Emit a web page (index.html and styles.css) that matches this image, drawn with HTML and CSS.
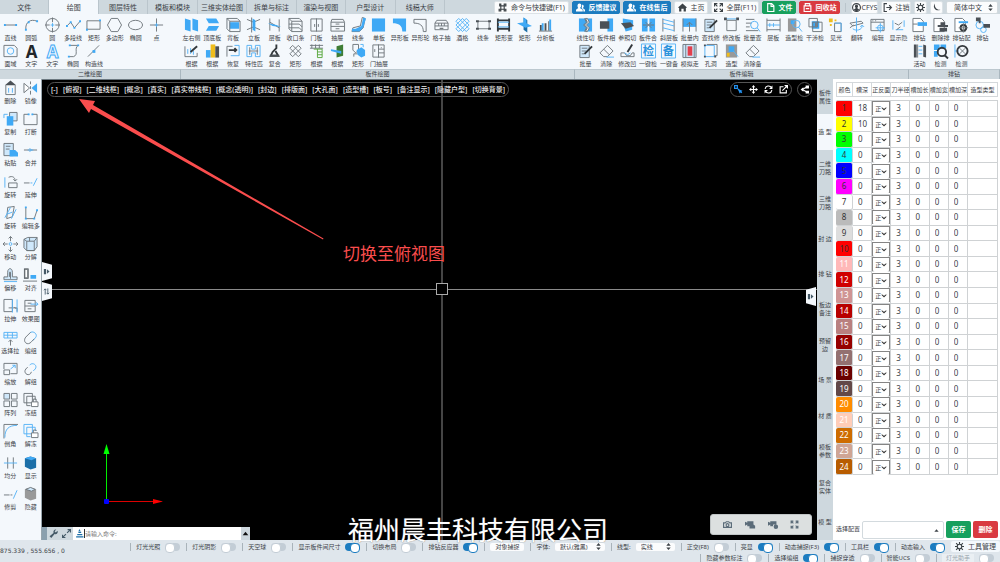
FILE: index.html
```html
<!DOCTYPE html>
<html lang="zh-CN">
<head>
<meta charset="utf-8">
<title>板件设计</title>
<link rel="stylesheet" href="styles.css">
</head>
<body>
<header class="topbar">
  <nav class="tabs">
    <button>文件</button><button class="active">绘图</button><button>图层特性</button><button>模板和模块</button><button>三维实体绘图</button><button>拆单与标注</button><button>渲染与视图</button><button>户型设计</button><button>线稿大师</button>
  </nav>
  <div class="actions">
    <button class="act w-xl"><i data-icon="command"></i>命令与快捷键(F1)</button>
    <button class="act blue w-l"><i data-icon="people"></i>反馈建议</button>
    <button class="act blue w-l"><i data-icon="people"></i>在线售后</button>
    <button class="act w-s"><i data-icon="home"></i>主页</button>
    <button class="act w-l"><i data-icon="full"></i>全屏(F11)</button>
    <button class="act green w-s"><i data-icon="file"></i>文件</button>
    <button class="act red w-m"><i data-icon="bin"></i>回收站</button>
    <span class="rule"></span>
    <button class="act user"><i data-icon="user"></i>CFYS</button>
    <button class="act w-xs"><i data-icon="logout"></i>注销</button>
    <button class="act sq" aria-label="设置"><i data-icon="gear"></i></button>
    <button class="act sq" aria-label="深色模式"><i data-icon="moon"></i></button>
    <span class="pick lang"><select aria-label="语言"><option>简体中文</option></select><i data-icon="updown"></i></span>
  </div>
</header>

<section class="ribbon">
  <div class="group g-draw"><div class="tools" data-tools="draw"></div><h2>二维绘图</h2></div>
  <div class="group g-panel"><div class="tools" data-tools="panel"></div><h2>板件绘图</h2></div>
  <div class="group g-edit"><div class="tools" data-tools="edit"></div><h2>板件编辑</h2></div>
  <div class="group g-drill"><div class="tools" data-tools="drill"></div><h2>排钻</h2></div>
</section>

<main class="work">
  <aside class="side" data-tools="side"></aside>
  <div class="canvas">
    <svg class="scene" aria-hidden="true">
      <path d="M400 0V460M0 209.500H776" stroke="#8a8a8a" fill="none"/>
      <rect x="394.500" y="203.500" width="11" height="11" fill="#000" stroke="#aaa"/>
      <path d="M64.500 420V372" stroke="#0e0"/><path d="M64.500 364l3 10h-6z" fill="#0f0"/>
      <path d="M65 421.500H113" stroke="#d00"/><path d="M121 421.500l-10 -2.500v5z" fill="#f00"/>
      <rect x="62" y="419" width="5" height="5" rx="1" fill="#00f"/>
      <path d="M37 19L53 21L51 25L281.500 158.500L281 159.500L49 29L47 33Z" fill="#fa4d4d"/>
    </svg>
    <p class="note">切换至俯视图</p>
    <div class="viewbar">
      <button>[-]</button><button>[俯视]</button><button>[二维线框]</button><button>[概念]</button><button>[真实]</button><button>[真实带线框]</button><button>[概念(透明)]</button><button>[封边]</button><button>[排版面]</button><button>[大孔面]</button><button>[造型槽]</button><button>[板号]</button><button>[备注显示]</button><button>[隐藏户型]</button><button>[切换背景]</button>
    </div>
    <div class="navbar">
      <div class="pill">
        <button class="on" aria-label="选择"><i data-icon="pick"></i></button><button aria-label="平移"><i data-icon="pan"></i></button><button aria-label="旋转视图"><i data-icon="orbit"></i></button><button aria-label="弹出"><i data-icon="popout"></i></button>
      </div>
      <button class="pill single" aria-label="分享"><i data-icon="share"></i></button>
    </div>
    <div class="handles">
      <button aria-label="展开左栏"><i data-icon="tabright"></i></button><button aria-label="切换顺序"><i data-icon="swap"></i></button>
    </div>
    <button class="handle-right" aria-label="收起右栏"><i data-icon="tabright"></i></button>
    <form class="command">
      <span class="grip"></span>
      <button type="button" aria-label="工具"><i data-icon="wrench"></i></button>
      <button type="button" aria-label="展开"><i data-icon="expand"></i></button>
      <label class="prompt"><i data-icon="stack"></i><input type="text" placeholder="请输入命令:" aria-label="命令"></label>
      <button type="button" class="up" aria-label="历史"><i data-icon="caret"></i></button>
    </form>
    <div class="camera">
      <button aria-label="拍照"><i data-icon="photo"></i></button><button aria-label="录像"><i data-icon="video"></i></button><button aria-label="录像设置"><i data-icon="video2"></i></button><button aria-label="全屏"><i data-icon="corners"></i></button>
    </div>
    <p class="caption">福州晨丰科技有限公司</p>
  </div>
  <nav class="vtabs">
    <button>板件<br>属性</button><button class="active">造 型</button><button>二维<br>刀路</button><button>三维<br>刀路</button><button>封 边</button><button>排 钻</button><button>板边<br>备注</button><button>预留<br>边</button><button>场 景</button><button>材 质</button><button>模板<br>参数</button><button>复合<br>实体</button><button>模 型</button>
  </nav>
  <aside class="props">
    <table>
      <thead><tr><th class="c-color">颜色</th><th>槽深</th><th>正反面</th><th>刀半径</th><th>槽加长</th><th>槽加宽</th><th>槽加深</th><th class="c-type">造型类型</th></tr></thead>
      <tbody id="rows"></tbody>
    </table>
    <div class="config">
      <label for="config">选择配置</label>
      <span class="pick"><select id="config"><option></option></select><i data-icon="caret"></i></span>
      <button class="save">保存</button><button class="del">删除</button>
    </div>
  </aside>
</main>

<footer class="status">
  <output class="coords">875.339 , 555.656 , 0</output>
  <div class="lines">
    <div class="line">
      <label>灯光光照<input type="checkbox"></label>
      <label>灯光阴影<input type="checkbox"></label>
      <label>天空球<input type="checkbox"></label>
      <label>显示板件间尺寸<input type="checkbox" checked></label>
      <label>切换布局<input type="checkbox"></label>
      <label>排钻反应器<input type="checkbox" checked></label>
      <span class="item"><button class="snap">对象捕捉</button></span>
      <label>字体:<span class="pick font"><select><option>默认(雅黑)</option></select><i data-icon="updown"></i></span></label>
      <label>线型:<span class="pick stroke"><select><option>实线</option></select><i data-icon="updown"></i></span></label>
      <label>正交(F8)<input type="checkbox"></label>
      <label>亮显<input type="checkbox" checked></label>
      <label>动态捕捉(F3)<input type="checkbox" checked></label>
      <label>工具栏<input type="checkbox" checked></label>
      <label>动态输入<input type="checkbox" checked></label>
      <button class="manage"><i data-icon="gear"></i>工具管理</button>
    </div>
    <div class="line second">
      <label>隐藏参数标注<input type="checkbox"></label>
      <label>选择编组<input type="checkbox" checked></label>
      <label>捕捉穿透<input type="checkbox"></label>
      <label>智能UCS<input type="checkbox"></label>
      <label class="off"><span>灯光助手</span><input type="checkbox" disabled></label>
    </div>
  </div>
</footer>
<script src="script.js"></script>
</body>
</html>
```

FILE: styles.css
```css
* { box-sizing: border-box; }
body {
  margin: 0; height: 100vh; display: flex; flex-direction: column; overflow: hidden;
  font: 6px/10px "Noto Sans", "Noto Sans CJK SC", sans-serif; color: #3c4247; background: #f4f8fc;
}
button, input, select { font: inherit; color: inherit; margin: 0; padding: 0; border: 0; background: none; border-radius: 0; }
button { white-space: nowrap; }
p, h2 { margin: 0; font-weight: 400; }
i { display: flex; }
svg { display: block; }

/* icon strokes and fills */
.ico { width: 16px; height: 16px; fill: none; stroke-width: 1; overflow: visible; }
.tool .ico { width: 15px; height: 16px; }
.ico .k { stroke: #6f767c; } .ico .b { stroke: #55b2f5; } .ico .g { stroke: #58a83c; }
.ico .h { stroke: #33383c; stroke-width: 2; } .ico .c { stroke: currentColor; stroke-width: 2; }
.ico .K { fill: #4a5056; } .ico .B { fill: #3fa9f5; } .ico .P { fill: #cfe8fb; stroke: #6f767c; }
.ico .C { fill: currentColor; } .ico .Y { fill: #efbd1c; } .ico .R { fill: #e33f4c; } .ico .N { fill: #3e7d35; }
.ico .Q { fill: #999; } .ico .D { fill: #1c6fa8; } .ico .W { fill: #fff; stroke: #6f767c; }
.ico text { font: bold 12px "Noto Sans CJK SC", sans-serif; text-anchor: middle; fill: #2c93dc; stroke: none; }
.ico .letter { font: bold 18px "Noto Sans", sans-serif; fill: #22262a; }
.ico .hollow { font: bold 18px "Noto Sans", sans-serif; fill: #e8f5ff; stroke: #3fa9f5; }

/* top bar */
.topbar { display: flex; height: 14px; background: #ced8de; font-size: 7px; justify-content: space-between; }
.tabs { display: grid; grid-template-columns: repeat(9, 1fr); flex: 0 1 445px; }
.tabs button { border-right: 1px solid #bac5cc; padding-top: 2px; }
.tabs .active { background: #f4f8fc; }
.actions { display: flex; gap: 3px; padding: 1px 2px 0 0; }
.act { display: flex; align-items: center; justify-content: center; gap: 4px; background: #fbfcfd; border: 1px solid #dce2e6; border-radius: 2px; height: 13px; }
.act .ico { width: 9px; height: 9px; }
.act.blue { background: #1c7cc0; color: #fff; border-color: #1c7cc0; font-weight: 600; }
.act.green { background: #17a05d; color: #fff; border-color: #17a05d; font-weight: 600; }
.act.red { background: #d93a40; color: #fff; border-color: #d93a40; font-weight: 600; }
.w-xl { width: 75px; } .w-l { width: 48px; } .w-m { width: 41px; } .w-s { width: 34px; } .w-xs { width: 30px; }
.user { width: 27px; gap: 1px; } .sq { width: 13px; }
.rule { width: 1px; margin: 2px; background: #bac5cc; }
.pick { display: grid; align-items: center; min-width: 0; }
.pick > * { grid-area: 1 / 1; }
.pick select { appearance: none; width: 100%; height: 100%; background: #fbfcfd; border: 1px solid #d3dade; border-radius: 2px; min-width: 0; }
.pick i { justify-self: end; pointer-events: none; margin-right: 4px; }
.pick .ico { width: 7px; height: 7px; }
.lang { width: 52px; } .lang select { padding-left: 7px; }

/* ribbon */
.ribbon { display: grid; grid-template-columns: 181fr 394fr 334fr 91fr; }
.group { min-width: 0; }
.group h2 { height: 10px; background: #ced8de; border-top: 1px solid #bcc8cf; border-right: 1px solid #aab7bf; text-align: center; font-size: 6px; line-height: 9px; }
.tools { display: grid; grid-auto-rows: 26px; padding-top: 3px; height: 55px; }
.g-draw .tools { grid-template-columns: repeat(8, 1fr); padding-right: 14px; }
.g-panel .tools { grid-template-columns: repeat(18, 1fr); padding-right: 19px; }
.g-edit .tools { grid-template-columns: repeat(16, 1fr); }
.g-drill .tools { grid-template-columns: repeat(4, 1fr); padding-right: 7px; }
.tool { display: flex; flex-direction: column; align-items: center; min-width: 0; line-height: 10px; }

/* work area */
.work { flex: 1; display: flex; min-height: 0; }
.side { flex: none; width: 42px; display: grid; grid-template-columns: 1fr 1fr; grid-template-rows: repeat(14, 1fr); padding-bottom: 24px; border-right: 1px solid #98a5ad; }
.side .tool { padding-top: 1px; }
.canvas { flex: 1; position: relative; background: #000; min-width: 0; border-top: 1px solid #6c7880; }
.scene { position: absolute; inset: 0; width: 100%; height: 100%; }
.note { position: absolute; left: 301px; top: 162px; font-size: 17px; line-height: 24px; color: #fa4d4d; }
.caption { position: absolute; left: 306px; bottom: -2px; z-index: 2; font-family: "Noto Sans CJK SC", sans-serif; font-size: 26px; line-height: 26px; color: #fff; text-shadow: 0 0 1px #555; white-space: nowrap; }
.viewbar { position: absolute; left: 5px; top: 2px; height: 15px; display: flex; gap: 5px; padding: 0 3px; border: 1px solid #555; border-radius: 8px; color: #eee; font-size: 7px; font-weight: 500; }
.navbar { position: absolute; right: 5px; top: 2px; display: flex; gap: 5px; color: #fff; }
.pill { display: flex; gap: 6px; align-items: center; height: 15px; padding: 0 3px; border: 1px solid #555; border-radius: 8px; }
.pill .ico { width: 9px; height: 9px; }
.single { padding: 0 2px; }
.pill .on { color: #2492f0; }
.handles { position: absolute; left: 0; top: 182px; display: grid; gap: 1px; }
.handles button, .handle-right { width: 10px; height: 19px; padding-left: 1px; background: #f4f8fc; clip-path: polygon(0 0, 100% 15%, 100% 85%, 0 100%); }
.handle-right { position: absolute; right: 1px; top: 207px; clip-path: polygon(0 15%, 100% 0, 100% 100%, 0 85%); }
.handles .ico, .handle-right .ico { width: 7px; height: 7px; color: #445967; }
.command { position: absolute; left: 0; bottom: 0; width: 208px; height: 13px; display: flex; background: #ced8de; color: #445967; }
.grip { width: 5px; background: #8ba0ae; }
.command button { width: 13px; display: flex; align-items: center; justify-content: center; }
.command .ico { width: 9px; height: 9px; }
.command .up { width: 9px; color: #111; }
.prompt { flex: 1; display: flex; align-items: center; background: #fff; color: #1c6fa8; padding-left: 2px; min-width: 0; }
.prompt input { flex: 1; min-width: 0; border-left: 1px solid #333; height: 9px; }
.prompt input::placeholder { color: #777; }
.camera { position: absolute; right: 5px; bottom: 5px; height: 21px; width: 102px; display: flex; justify-content: space-around; align-items: center; padding: 0 5px; background: #dce0e0; border: 1px solid #c0c5c6; border-radius: 3px; color: #5b6c79; }
.camera .ico { width: 9px; height: 9px; }

/* right panel */
.vtabs { flex: none; width: 16px; display: grid; grid-template-rows: repeat(13, 1fr); background: #ced8de; }
.vtabs button { line-height: 8px; }
.vtabs .active { background: #f4f8fc; }
.props { flex: none; width: 167px; background: #fff; display: flex; flex-direction: column; padding: 3px 2px 2px 3px; }
table { width: 100%; height: 393px; border-collapse: separate; border-spacing: 0; table-layout: fixed; }
th { font-weight: 400; padding: 0; height: 15px; border: 1px solid #d4d8db; border-left-width: 0; white-space: nowrap; }
td { padding: 0; border: 1px solid #cfd2d4; border-width: 0 1px 1px 0; font-size: 8px; line-height: 14px; height: 15px; }
tbody tr:first-child td { border-top-width: 1px; }
thead::after { content: ""; display: block; height: 3px; }
.c-color { width: 17px; border-left-width: 1px; } .c-type { width: 30px; }
.swatch { text-align: center; border-radius: 2px; }
td input { display: block; width: 100%; height: 14px; padding-left: 5px; }
td .pick { border: 1px solid #858585; height: 14px; }
td .pick select { border: 0; font-size: 6px; padding-left: 2px; background: #fff; }
td .pick i { margin-right: 2px; color: #111; }
td .pick .ico { width: 6px; height: 6px; }
.config { display: flex; gap: 2px; height: 17px; margin-top: auto; align-items: stretch; line-height: 16px; }
.config .pick { flex: 1; }
.config .pick select { background: #fff; }
.save, .del { width: 25px; border-radius: 2px; color: #fff; font-size: 7px; font-weight: 600; background: #17a05d; }
.del { background: #d93a40; }

/* status bar */
.status { display: flex; align-items: center; height: 22px; background: #dfe6ec; white-space: nowrap; }
.lines { flex: 1; align-self: stretch; padding-top: 1px; }
.coords { font-family: "DejaVu Sans", sans-serif; font-size: 6px; width: 58px; }
.line { display: flex; justify-content: flex-end; height: 11px; align-items: center; }
.line label, .line .item { display: flex; align-items: center; gap: 5px; height: 8px; line-height: 8px; padding: 0 6px 0 5px; border-left: 1px solid #a9b3ba; }
.line input { appearance: none; width: 15px; height: 8px; border-radius: 4px; background: #c3cdd6; display: flex; }
.line input::before { content: ""; width: 8px; height: 8px; border-radius: 4px; background: #fff; border: 1px solid #c3cdd6; }
.line input:checked { background: #1c7cc0; justify-content: flex-end; }
.line input:checked::before { border-color: #1c7cc0; }
.snap { width: 34px; height: 8px; line-height: 8px; background: #fbfcfd; border-radius: 2px; }
.line .pick { height: 8px; } .line .pick i { margin-right: 3px; }
.line .pick select { border: 0; padding-left: 5px; line-height: 8px; }
.font { width: 50px; } .stroke { width: 39px; }
.manage { display: flex; gap: 4px; align-items: center; justify-content: center; width: 49px; height: 11px; background: #f4f8fc; font-size: 7px; border-radius: 2px; }
.manage .ico { width: 9px; height: 9px; }
.off span { background: #eaeff3; color: #9aa6ae; padding: 0 4px; line-height: 8px; }
```

FILE: script.js
```js
// Each icon is a list of layers on a 16x16 grid: a class letter, then path data.
const icons = {
  line: 'k M2 8H14|B M1 7h2v2h-2zM13 7h2v2h-2z',
  arc: 'k M2 13C1 5 7 1 14 4|B M1 12h2v2h-2zM13 3h2v2h-2zM4 4h2v2h-2z',
  circle: 'k M15 8A7 7 0 1 1 1 8A7 7 0 1 1 15 8M8 0V5M8 11V16M0 8H5M11 8H16|b M8 6V10M6 8H10',
  poly: 'k M1 9L5 5L9 11L15 4|B M0 8h2v2h-2zM4 4h2v2h-2zM8 10h2v2h-2zM14 3h2v2h-2z',
  rect: 'k M1 3.500H15V12.500H1Z|B M0 12h2v2h-2zM14 2h2v2h-2z',
  hex: 'k M4.500 1H11.500L15.500 8L11.500 15H4.500L.5 8Z',
  ellipse: 'k M15.500 8A7.500 5 0 1 1 .5 8A7.500 5 0 1 1 15.500 8',
  point: 'k M8 1V15M1 8H15|b M8 6V10M6 8H10',
  region: 'k M1 2H12L15 5V14H1Z|b M11.500 8A3.500 3.500 0 1 1 4.500 8A3.500 3.500 0 1 1 11.500 8',
  textA: 'letter A', textB: 'hollow A',
  spline: 'k M4 2H13C8 5 14 12 8 14H3|B M3 1h2v2h-2zM12 1h2v2h-2zM2 13h2v2h-2z',
  xline: 'k M2 14L14 2|B M7 7h3v3h-3z',
  lr: 'B M1 1L7 3V15L1 13ZM9 1L15 3V15L9 13Z',
  tb: 'B M1 1H12L15 6H4ZM4 9H15L12 14H1Z',
  back: 'B M4 5H14V12H4Z|k M1 1H12L15 4V15H4L1 12ZM1 1L4 4H15M4 4V15',
  stand: 'k M1 2L8 5L15 2M1 13L8 10L15 13M6 0V16|B M7 1L10 3V15L7 13Z',
  shelf: 'k M3 1V14M13 2V15M3 5L13 11|B M1 6L10 8L15 10L6 9Z',
  close: 'k M1 1H12L15 4V15H4L1 12ZM1 1L4 4H15M4 4V15M1 7H12L15 10M1 11H12L15 14',
  door: 'k M2 1.500H14V14.500H2ZM8 1V15M6 7V10M10 7V10',
  drawer: 'k M2 2H14L15.500 5V14.500H1V5ZM1 5H15M1 9.500H15M6 7H10M6 12H10',
  strip: 'k M12 0L10 9L2 11L1 15H9L13 11L15 1Z|B M13 0L11 9L5 12H1V15H9L13 11L16 1Z',
  square: 'B M1 1H15V15H1Z',
  odd: 'B M1 1H15V15H11C11 8 7 6 1 6Z',
  oddw: 'k M1 2H14V15H11C11 8 7 6 1 6Z',
  lattice: 'k M3 3H13L15 6V13H1V6ZM1 6H15M1 9H15M5 6V9M8 6V9M11 6V9|K M6 11h4v1h-4z',
  net: 'b M1 4L4 1L15 12L12 15L1 4M1 8L8 1L15 8L8 15ZM1 12L12 1L15 4L4 15Z',
  bar: 'k M2 4H14V12H2Z|K M0 3h3v2h-3zM13 3h3v2h-3zM0 11h3v2h-3zM13 11h3v2h-3z',
  rectv: 'h M2 1V15M14 1V15M2 3H14M2 12H14|b M2 5H14M2 10H14',
  cross: 'D M7 0L11 3V16L7 13Z|B M0 6L8 5L16 9L9 11ZM7 0L10 2V8L7 6Z',
  chart: 'K M2 8h2v6h-2zM7 6h2v8h-2zM11 4h1v10h-1z|B M4 6h2v8h-2zM12 2h2v12h-2z|k M1 14.500H15',
  ruler: 'k M1 3V14H14V10|b M4 6V11M7 5V11M10 8V12|h M7 9L14 3',
  bars: 'B M1 7h5v8h-5z|Y M6 1h5v14h-5z|K M11 3h4v12h-4z',
  restore: 'k M1 3H7M1 3V14|b M9 2H14V13H5|h M3 7H11M9 5L11 7L9 9',
  match: 'b M1 2H6V6H10V2H15V14H10V10H6V14H1Z|k M3 8H13M4 4V12M12 4V12',
  hook: 'h M10 1V5L6 9L4 13H12L9 8|K M3 12h10v2h-10z',
  wave: 'k M2 5L5 2L8 5L11 2L14 5L11 8L8 5L5 8ZM2 11L5 8L8 11L11 8L14 11L11 14L8 11L5 14Z',
  gridg: 'k M1 2H15M1 5H15M3 1V5M7 1V5M11 1V5|g M5 6H14V15H9V6M9 9H14M9 12H14',
  green: 'N M7 3L14 1V13L7 15Z|B M1 6L12 8V11L1 8Z',
  cubes: 'k M2 1H8V7L5 10L2 7ZM3 11H7M3 11V14|B M6 7L11 4L15 7V13L11 15L7 12Z|b M10 1H13V4',
  cabinet: 'k M2 1.500H14V14.500H2ZM8 1V15M8 6H14M8 10H14M4 6V9M11 4V5',
  tear: 'B M1 1H15V15H1Z|k M7 1L9 5L6 8L9 11L7 15|W M8 1L10 5L7 8L10 11L8 15H10L12 11L9 8L12 5L10 1Z',
  pcut: 'B M9 1H15V15H9Z|K M1 4H11V12H1Z',
  refcut: 'B M3 1L14 3V8L3 6ZM4 9L13 9V13L6 15Z|K M1 6L11 5L15 9L6 12Z',
  join: 'B M1 1H7V15H1ZM9 1H15V15H9Z|k M2 8H14M5 5L8 8L5 11M11 5L8 8L11 11',
  slant: 'k M2 1V15M14 2V15|b M2 2L14 5M2 6L14 9M2 11L14 14',
  inner: 'B M1 1H15V10H1Z|k M1 1V15M15 1V15M8 5V15M5 8L8 5L11 8',
  notepen: 'P M2 2H12V15H2Z|k M4 5H10M4 8H9M4 11H7|h M7 11L15 3',
  editp: 'b M1 1.500H15|k M3 3H13V14H3Z|K M0 0h3v3h-3zM13 0h3v3h-3z',
  search: 'k M1 2H10M1 6H7M1 10H5M1 14H14|b M14 8A4 4 0 1 1 6 8A4 4 0 1 1 14 8M13 11L16 15',
  layer: 'k M1 1V15M15 1V15M1 3H15M1 13H15|b M1 8H15M8 6V10M4 6V10',
  modelq: 'Q M1 1H10V15H1Z|B M4 3H8V7H4Z|b M14 7A4 4 0 1 1 6 7A4 4 0 1 1 14 7M12 10L16 15',
  clash: 'B M4 4H12V12H4Z|k M1 1H10V10H1ZM5 5H15V15H5Z|W M8 6H9V10H8Z',
  light: 'Y M1 1h4v4h-4zM7 2h2v2h-2zM2 7h2v2h-2z|k M7 6H14V15H7Z|b M7 6H14M14 6V15',
  flip: 'k M1 6L13 4L15 6L4 9ZM1 11L5 8|b M8 0V16M4 12C8 15 14 13 14 9M12 10L14 8L16 10',
  panelgear: 'k M1 2H15V14H1ZM1 5H15M3 3V4M6 3V4|b M14 11A3 3 0 1 1 8 11A3 3 0 1 1 14 11M11 6V16M6 11H16',
  dots: 'b M2 3V13M5 13H13M14 3V10|k M4 6L8 8L12 5M6 13L10 10',
  eraser: 'k M1 10L9 2L15 8L9 14H5ZM5 6L11 12|b M8 14.500H16',
  carve: 'k M1 10H5L7 13H11L13 10H15V14H1Z|h M8 9L13 1|b M5 10L8 12L11 10',
  jian: 'b M.5 .5H15.500V15.500H.5Z|zh 检', bei: 'b M.5 .5H15.500V15.500H.5Z|zh 备',
  sim: 'P M1 1H15V15H1Z|R M6 3H11V13H6Z|k M4 1V15M13 1V15',
  hole: 'b M2 2H12V14H2Z|k M4 1H15V13M15 13H12|K M1 13h2v2h-2zM12 13h2v2h-2zM1 1h2v2h-2z',
  shape: 'Q M2 1H14V15H2Z|B M5 3H11V9H5Z|Y M3 10h3v4h-3z|b M10 8L15 14',
  drill: 'W M1 1H9L12 4V15H1Z|B M6 5H16V9H6Z|k M1 7H6',
  drilldel: 'W M1 1H9L12 4V15H1Z|K M8 5h5v3h3v2h-11v-2h3zM7 11h8v4h-8z',
  drillset: 'W M1 1H9L12 4V15H1Z|B M5 4H15V6H5Z|h M13 11A3 3 0 1 1 7 11A3 3 0 1 1 13 11|k M10 6V16M5 11H15',
  drillp: 'b M9 8A4 4 0 1 1 1 8A4 4 0 1 1 9 8M12 13A3 3 0 1 1 6 13A3 3 0 1 1 12 13|K M1 0h5v4h-5zM9 7h7v4h-7zM4 3h2v3h-2z',
  active: 'K M2 1H5V15H2ZM12 1L15 2V15L12 14Z|b M7 3H11M7 7H11M7 11H11|k M6 1V15',
  detect: 'B M1 1h6v6h-6zM8 1h6v4h-6zM1 8h4v6h-4z|h M14 9A4.500 4.500 0 1 1 5 9A4.500 4.500 0 1 1 14 9M12 12L16 16',
  detectx: 'b M1 1V15M1 8H5|h M14.500 8A5.500 5.500 0 1 1 3.500 8A5.500 5.500 0 1 1 14.500 8|k M6 5L12 11M12 5L6 11',
  del: 'K M2 5L8 0L14 5Z|k M3 5V15H13V5|b M6 8V13M10 8V13',
  mirror: 'W M1 3V13L7 8Z|B M15 3V13L9 8Z|k M8 1V4M8 6V9M8 11V15',
  copy: 'P M7 1H15V10H7Z|B M4 5H11V15H4Z|b M1 7V3H5',
  brk: 'k M6 3H1V14H15V3H10|B M5 2h2v2h-2zM9 2h2v2h-2z',
  paste: 'P M1 1H11V14H1Z|k M3 4H8M3 7H7|B M7 8H13L16 11V15H7Z',
  merge: 'k M1 8H15|b M5 8H11M7 6L9 8L7 10',
  rot1: 'k M6 9H15V14H6ZM6 3C10 1 13 3 13 7M11 5L13 7L15 5|b M2 3V14',
  extend: 'k M1 9H7|b M8 9H10M11 12L15 4',
  rot2: 'k M5 2L12 1L10 12L4 14Z|b M2 13L8 2M9 14L14 4M5 9L10 7',
  editmore: 'k M3 2V14H12L15 5|B M2 1h2v2h-2zM2 13h2v2h-2zM11 13h2v2h-2zM14 4h2v2h-2z',
  move: 'k M8 0V5M8 11V16M0 8H5M11 8H16M6 2L8 0L10 2M6 14L8 16L10 14M2 6L0 8L2 10M14 6L16 8L14 10|b M9.500 8A1.500 1.500 0 1 1 6.500 8A1.500 1.500 0 1 1 9.500 8',
  box: 'P M1 3L5 1H15V11L12 15H4L1 12ZM4 5H12V15H4Z|k M1 3L4 5M12 5L15 1M7 1V5',
  offset: 'P M1 13H15V10H10V5C10 0 5 0 5 5V10H1Z|k M7 10V5H8V12|b M1 15H15',
  align: 'K M1 1H6V12H1Z|W M2 2H5V11H2Z|B M8 8H14V12H8Z|k M0 14.500H15',
  stretch: 'k M1 1H10V14H1ZM6 10H15V14|b M10 1V15M15 1V15|k M12 9L14 11',
  effect: 'k M2 2H13V14H2ZM2 8H13M5 5H9M5 11H9|b M8 6H16M14 4L16 6L14 8',
  selstr: 'b M1 2H15V8H1ZM5 2V8M10 2V8M1 5H15|k M8 16V10M6 12L8 10L10 12',
  link: 'b M7 3C10 -1 17 4 13 8L10 11|k M8 2L3 7C-1 12 5 17 9 12L12 9',
  scale: 'k M1 8V2H15V13H8M1 9H7V14H1Z|b M8 8L13 4M10 4H13V7',
  unlink: 'b M7 4C10 0 16 4 13 8L11 10|k M5 6L3 8C0 12 5 16 8 13L9 11',
  array: 'P M1 1H7V7H1Z|k M9 1H15V7H9ZM1 9H7V15H1ZM9 9H15V15H9Z',
  freeze: 'k M1 1H10V11H1ZM4 4H13V8M4 4V14H8|W M9 10H16V15H9Z|k M11 10V7H14V10',
  unfreeze: 'b M1 1H10V11H1ZM4 4H13V8M4 4V14H8|W M9 10H16V15H9Z|k M11 10V7H14V8',
  fillet: 'k M1 16V1H16|b M2 15C2 6 6 2 15 2',
  divide: 'k M5 2V14M11 2V14|b M1 8H15',
  cube: 'D M2 3L8 1L14 3V13L8 15L2 12Z|B M2 3L8 1L14 3L9 5Z',
  cubeg: 'Q M2 3L8 1L14 3V13L8 15L2 12Z|P M3 3L8 1L13 3L9 5Z',
  trim: 'k M1 9H7M8 9H10|b M11 13L15 4',
  command: 'c M5 5H11V11H5ZM5 5H3V2H5V5M11 5V2H14V5H11M5 11V14H2V11H5M11 11H14V14H11V11',
  people: 'C M6 1C11 1 10 7 7 9L12 12V15H0V12L4 9C2 7 2 1 6 1ZM11 3C15 3 14 8 12 9L16 12V15H13V12L10 9Z',
  home: 'C M8 1L16 8L14 9V15H10V10H6V15H2V9L0 8Z',
  full: 'c M1 6V1H6M10 1H15V6M15 10V15H10M6 15H1V10M1 1L6 6M15 1L10 6M15 15L10 10M1 15L6 10',
  corners: 'c M2 6V2H6M10 2H14V6M14 10V14H10M6 14H2V10M2 2L6 6M14 2L10 6M14 14L10 10M2 14L6 10',
  file: 'c M3 1H10L14 5V15H3ZM9 1V6H14',
  bin: 'c M2 5H14V15H2ZM4 5V1H12V5M5 10H11',
  user: 'c M15 8A7 7 0 1 1 1 8A7 7 0 1 1 15 8|C M8 3C12 3 11 8 9 9L13 12L8 15L3 12L7 9C5 8 4 3 8 3Z',
  logout: 'c M7 1H2V15H7M6 8H15M11 4L15 8L11 12',
  gear: 'c M12 8A4 4 0 1 1 4 8A4 4 0 1 1 12 8M8 0V4M8 12V16M0 8H4M12 8H16M2 2L5 5M11 11L14 14M14 2L11 5M5 11L2 14',
  moon: 'C M5 1C0 8 7 16 15 12C9 13 4 8 5 1Z',
  updown: 'C M8 0L13 6H3ZM8 16L13 10H3Z',
  chevron: 'c M2 5L8 11L14 5|c M3 4L8 9L13 4',
  caret: 'C M8 5L13 11H3Z',
  pick: 'c M1 1H6V6H1ZM6 6L14 14|C M7 7L15 10L10 15Z',
  pan: 'c M8 2V14M2 8H14|C M8 0L11 4H5ZM8 16L11 12H5ZM0 8L4 5V11ZM16 8L12 5V11Z',
  orbit: 'c M2 7C3 1 10 0 14 5M14 9C13 15 6 16 2 11|C M15 1V7H9ZM1 15V9H7Z',
  popout: 'c M8 3H2V14H13V9M6 10L14 2|C M9 0H16V7Z',
  share: 'c M4 8L13 3M4 8L13 13|C M1 8L6 4V12ZM10 1H16V6H10ZM10 10H16V15H10Z',
  tabright: 'C M2 2H7V14H2ZM9 3L15 8L9 13Z',
  swap: 'c M5 15V2M2 5L5 2L8 5M11 1V14M8 11L11 14L14 11',
  wrench: 'C M1 13L8 7C7 3 10 0 13 1L10 4L12 6L15 3C17 7 13 10 10 9L4 16Z',
  expand: 'c M9 7L14 2M10 1H15V6M7 9L2 14M1 10V15H6',
  stack: 'C M8 0L10 4H6ZM6 5H11V7H6ZM4 9H13V11H4ZM2 13H15V15H2Z',
  photo: 'c M1 5H4L6 3H10L12 5H15V13H1ZM10.500 9A2.500 2.500 0 1 1 5.500 9A2.500 2.500 0 1 1 10.500 9',
  video: 'C M0 3L4 5V2H15V8L18 10V15H8V11H4V8L0 10Z',
  video2: 'C M0 3L4 5V2H15V8H9V11H4V8L0 10ZM18 12A4 4 0 1 1 10 12A4 4 0 1 1 18 12'
};

function draw(name) {
  const layers = icons[name].split('|').map(layer => {
    const cut = layer.indexOf(' ');
    const kind = layer.slice(0, cut), body = layer.slice(cut + 1);
    return /^(zh|letter|hollow)$/.test(kind)
      ? `<text class="${kind}" x="8" y="${kind === 'zh' ? 12 : 15}">${body}</text>`
      : `<path class="${kind}" d="${body}"/>`;
  });
  return `<svg class="ico" viewBox="0 0 16 16" aria-hidden="true">${layers.join('')}</svg>`;
}

const tools = {
  draw: '直线 line,圆弧 arc,圆 circle,多段线 poly,矩形 rect,多边形 hex,椭圆 ellipse,点 point,面域 region,文字 textA,文字 textB,椭圆 spline,构造线 xline',
  panel: '左右侧 lr,顶底板 tb,背板 back,立板 stand,层板 shelf,收口条 close,门板 door,抽屉 drawer,线条 strip,单板 square,异形板 odd,异形轮 oddw,格子抽 lattice,酒格 net,线条 bar,矩形变 rectv,矩形 cross,分析板 chart,根据 ruler,根据 bars,恢复 restore,特性匹 match,复合 hook,矩形 wave,根据 gridg,根据 green,矩形 cubes,门抽屉 cabinet',
  edit: '线性切 tear,板件相 pcut,参照切 refcut,板件合 join,斜层板 slant,批量内 inner,查找修 notepen,修改板 editp,批量查 search,层板 layer,造型检 modelq,干涉检 clash,见光 light,翻转 flip,编辑 panelgear,显示隐 dots,批量 notepen,清除 eraser,修改凹 carve,一键检 jian,一键备 bei,模拟走 sim,孔洞 hole,造型 shape,清除备 eraser',
  drill: '排钻 drill,删除排 drilldel,排钻配 drillset,排钻 drillp,活动 active,检测 detect,检测 detectx',
  side: '删除 del,镜像 mirror,复制 copy,打断 brk,粘贴 paste,合并 merge,旋转 rot1,延伸 extend,旋转 rot2,编辑多 editmore,移动 move,分解 box,偏移 offset,对齐 align,拉伸 stretch,效果图 effect,选择拉 selstr,编组 link,缩放 scale,解组 unlink,阵列 array,冻结 freeze,倒角 fillet,解冻 unfreeze,均分 divide,显示 cube,修剪 trim,隐藏 cubeg'
};

document.querySelectorAll('[data-tools]').forEach(box => {
  box.innerHTML = tools[box.dataset.tools].split(',').map(entry => {
    const [label, icon] = entry.split(' ');
    return `<button class="tool">${draw(icon)}<span>${label}</span></button>`;
  }).join('');
});

const colors = ['#f00', '#ff0', '#0f0', '#0ff', '#00f', '#f0f', '#fff', '#bbb', '#ddd', '#f00', '#ffb8b8', '#d00000',
  '#cf9494', '#b80000', '#b98080', '#960000', '#937070', '#6a0000', '#634848', '#ff8c00', '#ffcdb8', '#ce6c00', '#cfa595', '#b85c00'];
const depths = { 1: 18, 2: 10 };
const field = (label, value) => `<td><input type="text" aria-label="${label}" value="${value}"></td>`;

document.getElementById('rows').innerHTML = colors.map((color, i) => {
  const n = i + 1;
  return `<tr><td class="swatch" style="background:${color};color:${n > 10 ? '#fff' : '#333'}">${n}</td>`
    + field('槽深', depths[n] || 0)
    + `<td><span class="pick"><select aria-label="正反面"><option>正</option></select><i data-icon="chevron"></i></span></td>`
    + field('刀半径', 3) + field('槽加长', 0) + field('槽加宽', 0) + field('槽加深', 0) + field('造型类型', '') + '</tr>';
}).join('');

document.querySelectorAll('[data-icon]').forEach(slot => { slot.innerHTML = draw(slot.dataset.icon); });
```
